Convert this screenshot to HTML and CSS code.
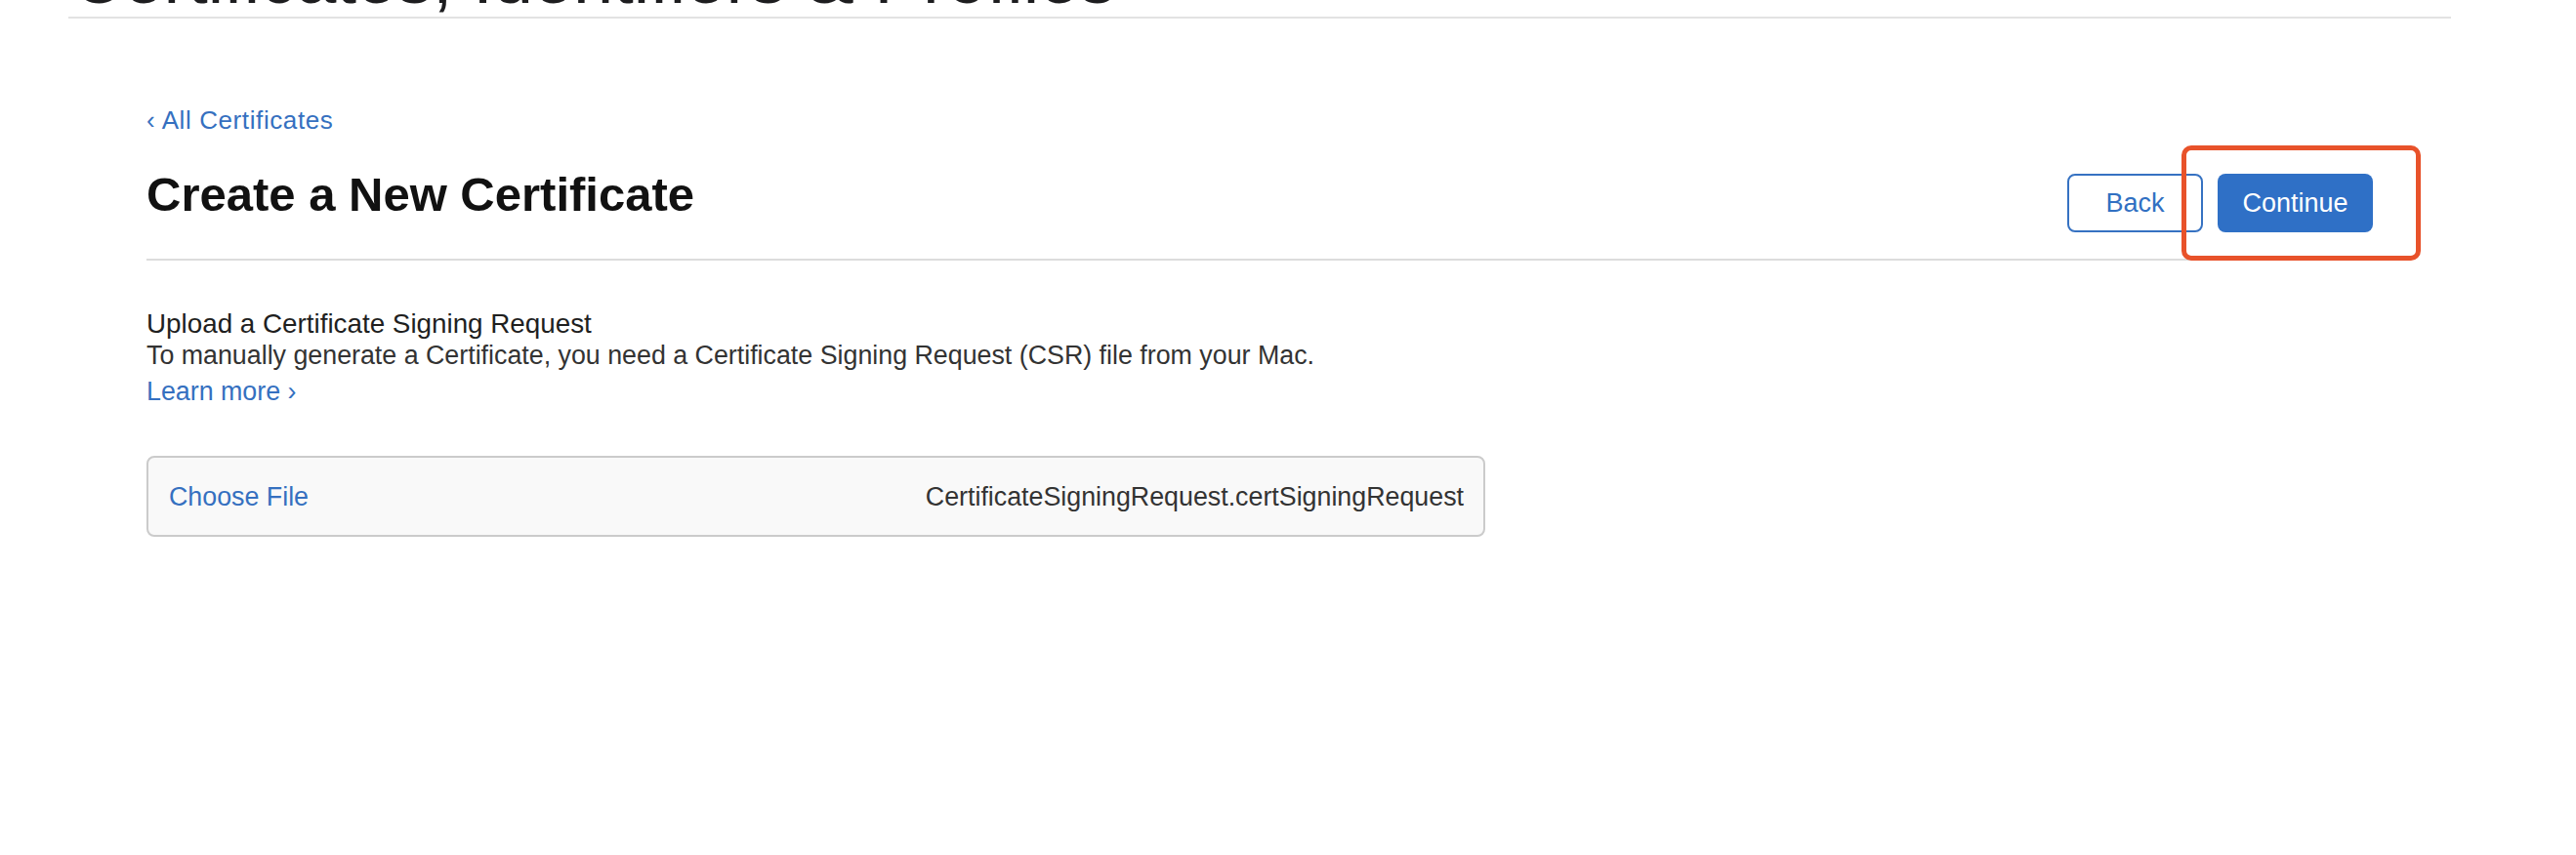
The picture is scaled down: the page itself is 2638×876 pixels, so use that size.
FILE: index.html
```html
<!DOCTYPE html>
<html lang="en">
<head>
<meta charset="utf-8">
<title>Create a New Certificate</title>
<link rel="stylesheet" href="styles.css">
</head>
<body>
<header class="topbar">
  <h1 class="site-title">Certificates, Identifiers &amp; Profiles</h1>
</header>
<main class="content">
  <a class="back-link" href="#">&lsaquo; All Certificates</a>
  <div class="title-row">
    <h2 class="page-title">Create a New Certificate</h2>
    <div class="actions">
      <button class="btn btn-outline">Back</button>
      <button class="btn btn-primary">Continue</button>
      <span class="highlight"></span>
    </div>
  </div>
  <section class="upload">
    <h3 class="upload-title">Upload a Certificate Signing Request</h3>
    <p class="upload-desc">To manually generate a Certificate, you need a Certificate Signing Request (CSR) file from your Mac.</p>
    <a class="learn-more" href="#">Learn more &rsaquo;</a>
    <div class="file-box">
      <span class="choose-file">Choose File</span>
      <span class="file-name">CertificateSigningRequest.certSigningRequest</span>
    </div>
  </section>
</main>
</body>
</html>
```
FILE: styles.css
```css
* { box-sizing: border-box; }
html, body { margin: 0; padding: 0; background: #fff; }
body {
  font-family: "Liberation Sans", Arial, sans-serif;
  color: #333;
  overflow: hidden;
  height: 876px;
}
.topbar {
  margin: 0 128px 0 70px;
  padding: 0 0 0 3px;
  border-bottom: 2px solid #e3e3e3;
}
.site-title {
  margin: -61px 0 0 0;
  font-size: 74px;
  line-height: 78px;
  font-weight: 400;
  color: #1d1d1f;
  white-space: nowrap;
}
.content {
  margin: 0 208px 0 150px;
  display: flex;
  flex-direction: column;
  align-items: flex-start;
}
.back-link {
  margin-top: 89px;
  font-size: 26px;
  line-height: 31px;
  color: #3570c0;
  text-decoration: none;
  letter-spacing: 0.6px;
}
.title-row {
  align-self: stretch;
  margin-top: 31px;
  display: flex;
  justify-content: space-between;
  align-items: flex-start;
  padding-bottom: 27px;
  border-bottom: 2px solid #dcdcdc;
}
.page-title {
  margin: 0;
  font-size: 49px;
  line-height: 59px;
  font-weight: 700;
  color: #111;
}
.actions {
  position: relative;
  margin-top: 8px;
  display: flex;
  gap: 15px;
}
.btn {
  height: 60px;
  border-radius: 8px;
  font-family: "Liberation Sans", Arial, sans-serif;
  font-size: 27px;
  text-align: center;
  padding: 0;
  cursor: pointer;
}
.btn-outline {
  width: 139px;
  background: #fff;
  border: 2px solid #3672c2;
  color: #3170c2;
}
.btn-primary {
  width: 159px;
  background: #2f70c6;
  border: none;
  color: #fff;
}
.highlight {
  position: absolute;
  left: 117px;
  top: -29px;
  width: 245px;
  height: 118px;
  border: 5px solid #e8522a;
  border-radius: 10px;
  pointer-events: none;
}
.upload {
  align-self: stretch;
  margin-top: 48px;
}
.upload-title {
  margin: 0;
  font-size: 27.8px;
  line-height: 33px;
  font-weight: 400;
  color: #1f1f1f;
}
.upload-desc {
  margin: 0;
  font-size: 26.8px;
  line-height: 33px;
  color: #333;
}
.learn-more {
  display: block;
  margin-top: 4px;
  font-size: 26.8px;
  line-height: 33px;
  color: #3570c0;
  text-decoration: none;
}
.file-box {
  margin-top: 49px;
  width: 1371px;
  height: 83px;
  border: 2px solid #cbcbcb;
  border-radius: 8px;
  background: #f9f9f9;
  display: flex;
  align-items: center;
  justify-content: space-between;
  padding: 2px 20px 0 21px;
  font-size: 26.8px;
}
.choose-file { color: #3570c0; }
.file-name { color: #333; }
```
